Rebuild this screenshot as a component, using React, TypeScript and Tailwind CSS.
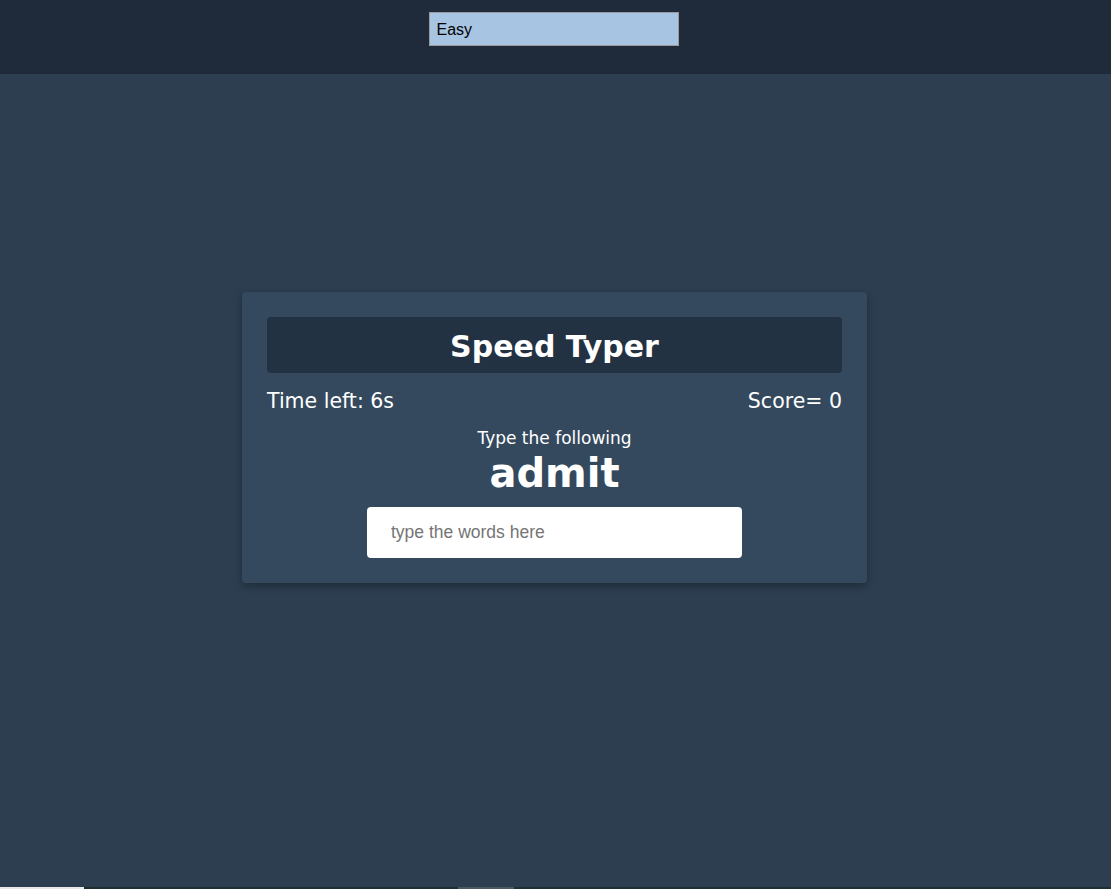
export default function App() {
  return (
    <div className="min-h-screen bg-[#2c3e50] flex flex-col font-['DejaVu_Sans',Verdana,sans-serif] text-white">
      {/* Top bar with difficulty */}
      <header className="h-[74px] bg-[#1f2b3a] flex justify-center pt-[12px] pr-[4px]">
        <div className="w-[250px] h-[34px] bg-[#a7c4e2] border border-[#9a9a9a] flex items-center px-[7px] pt-[1px] text-[16px] text-black font-['Liberation_Sans',Arial,sans-serif]">
          Easy
        </div>
      </header>

      <main className="flex-1 flex justify-center pt-[218px] pr-[2px]">
        <div className="w-[625px] h-[291px] bg-[#34495e] rounded-[4px] shadow-[0_3px_8px_rgba(0,0,0,0.3)] p-[25px] flex flex-col">
          <div className="h-[56px] bg-[#223243] rounded-[4px] flex items-center justify-center pt-[3px]">
            <h1 className="text-[30px] font-bold leading-none">Speed Typer</h1>
          </div>
          <div className="flex justify-between mt-[14px] text-[20.5px] leading-[28px]">
            <span>Time left: 6s</span>
            <span>Score= 0</span>
          </div>
          <div className="text-center text-[17px] leading-[22px] mt-[12px]">Type the following</div>
          <div className="text-center text-[40px] font-bold leading-[44px] mt-[2px]">admit</div>
          <div className="flex justify-center mt-[12px]">
            <input
              type="text"
              placeholder="type the words here"
              className="w-[375px] h-[51px] bg-white rounded-[4px] px-[24px] text-[17.5px] text-black placeholder:text-[#757575] outline-none font-['Liberation_Sans',Arial,sans-serif]"
            />
          </div>
        </div>
      </main>

      {/* bottom sliver */}
      <div className="h-[2px] flex bg-[#1d2f30]">
        <div className="w-[84px] bg-[#e8e8e8]" />
        <div className="w-[374px]" />
        <div className="w-[56px] bg-[#4a5a5e]" />
      </div>
    </div>
  );
}
